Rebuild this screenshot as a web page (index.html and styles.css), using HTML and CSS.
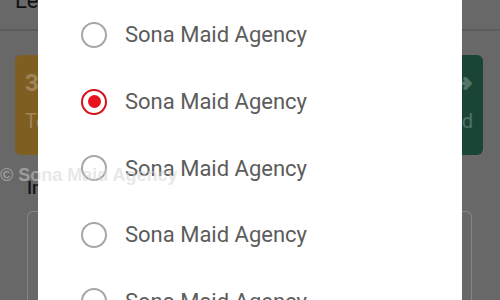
FILE: index.html
```html
<!DOCTYPE html>
<html>
<head>
<meta charset="utf-8">
<link rel="stylesheet" href="styles.css">
</head>
<body>
<div class="page">
  <header class="appbar"><span class="appbar-title">Leads</span></header>
  <div class="stats">
    <div class="stat stat-orange"><div class="stat-num">3</div><div class="stat-label">Total</div></div>
    <div class="stat stat-green"><div class="stat-num">&#10140;</div><div class="stat-label">Assigned</div></div>
  </div>
  <div class="section-title">Inquiries</div>
  <div class="outline-card"></div>
</div>

<div class="dialog">
  <ul class="options">
    <li class="option"><span class="radio"></span><span class="label">Sona Maid Agency</span></li>
    <li class="option"><span class="radio radio-on"></span><span class="label">Sona Maid Agency</span></li>
    <li class="option"><span class="radio"></span><span class="label">Sona Maid Agency</span></li>
    <li class="option"><span class="radio"></span><span class="label">Sona Maid Agency</span></li>
    <li class="option"><span class="radio"></span><span class="label">Sona Maid Agency</span></li>
  </ul>
</div>

<div class="watermark">&copy; Sona Maid Agency</div>
</body>
</html>
```

FILE: styles.css
```css
html, body {
  margin: 0;
  padding: 0;
  width: 500px;
  height: 300px;
  overflow: hidden;
  background: #686868;
  font-family: Roboto, "Liberation Sans", sans-serif;
}

.page {
  width: 500px;
  height: 300px;
  display: flex;
  flex-direction: column;
}

.appbar {
  height: 29px;
  border-bottom: 2px solid #5c5c5c;
  padding-left: 15px;
  display: flex;
  align-items: flex-end;
  overflow: hidden;
}

.appbar-title {
  font-size: 22px;
  color: #111;
  line-height: 22px;
  margin-bottom: 17px;
}

.stats {
  display: flex;
  justify-content: space-between;
  padding: 24px 17px 0 15px;
}

.stat {
  width: 120px;
  height: 100px;
  border-radius: 6px;
  box-sizing: border-box;
  padding: 14px 10px;
  color: rgba(255, 255, 255, 0.25);
}

.stat-orange { background: #7f5e22; }
.stat-green  { background: #1a4536; text-align: right; }

.stat-num {
  font-size: 24px;
  font-weight: bold;
  height: 32px;
}

.stat-label {
  font-size: 20px;
  margin-top: 8px;
}

.section-title {
  margin: 22px 0 0 27px;
  font-size: 18px;
  font-weight: 500;
  color: #151515;
  height: 34px;
  overflow: hidden;
}

.outline-card {
  margin: 0 28px 0 27px;
  flex: 1;
  border: 1px solid #858585;
  border-bottom: none;
  border-radius: 6px 6px 0 0;
}

.dialog {
  position: absolute;
  left: 38px;
  top: -20px;
  width: 424px;
  height: 360px;
  background: #fff;
}

.options {
  list-style: none;
  margin: 0;
  padding: 0 0 0 43px;
}

.option {
  height: 66.6px;
  display: flex;
  align-items: center;
  gap: 18px;
}

.option:first-child { margin-top: 21.7px; }

.radio {
  width: 26px;
  height: 26px;
  box-sizing: border-box;
  border: 2px solid #a6a6a6;
  border-radius: 50%;
  display: flex;
  align-items: center;
  justify-content: center;
  flex: none;
}

.radio-on {
  border-color: #d4101a;
}

.radio-on::after {
  content: "";
  width: 13px;
  height: 13px;
  border-radius: 50%;
  background: #e8131c;
}

.label {
  font-size: 22px;
  color: #5c5c5c;
}

.watermark {
  position: absolute;
  left: 0;
  top: 165px;
  font-family: "Liberation Sans", Arial, sans-serif;
  font-weight: bold;
  font-size: 18px;
  color: rgba(210, 210, 210, 0.5);
  white-space: nowrap;
}
```
